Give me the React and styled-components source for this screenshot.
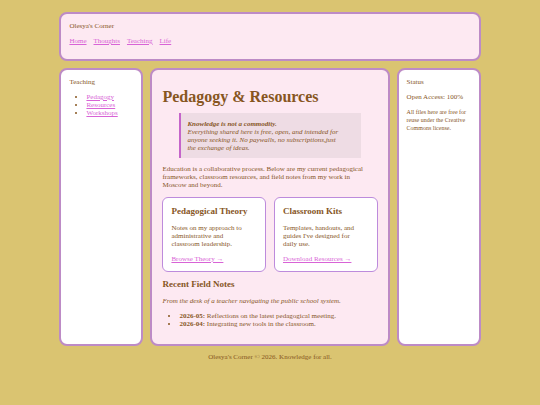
import React from "react";
import styled, { createGlobalStyle } from "styled-components";

const GlobalStyle = createGlobalStyle`
  *, *::before, *::after { box-sizing: border-box; }
  body {
    margin: 0;
    background: #dac471;
    color: #87561f;
    font-family: "Liberation Serif", serif;
    font-size: 7px;
    line-height: 8px;
  }
`;

const Page = styled.div`
  width: 78%;
  margin: 0 auto;
  padding: 12px 0;
  display: flex;
  flex-direction: column;
  gap: 7px;
`;

const Panel = styled.div`
  border: 2px solid #bd8bc6;
  border-radius: 8px;
  padding: 8px;
  background: ${({ $tint }) => ($tint ? "#fde9f2" : "#ffffff")};
`;

const Header = styled(Panel)`
  padding-bottom: 14px;
`;

const Columns = styled.div`
  display: grid;
  grid-template-columns: 84px minmax(0, 1fr) 84px;
  gap: 7px;
`;

const Main = styled(Panel)`
  padding: 10px 10px 16px;
`;

const Text = styled.p`
  margin: 0 0 7px;
`;

const Intro = styled(Text)`
  margin-bottom: 8px;
  padding-right: 10px;
`;

const Small = styled.p`
  margin: 0;
  font-size: 6px;
`;

const Nav = styled.nav`
  display: flex;
  gap: 7px;
`;

const Link = styled.a`
  color: #d863d6;
  text-decoration: underline;
`;

const List = styled.ul`
  margin: 0;
  padding-left: 17px;
`;

const Title = styled.h1`
  margin: 9px 0 8px;
  font-size: 16px;
  line-height: 16px;
`;

const Quote = styled.blockquote`
  margin: 0 17px 7px;
  padding: 7px 18px 6px 6px;
  border-left: 2px solid #c565ca;
  background: #eedce4;
  font-style: italic;
`;

const Cards = styled.div`
  display: grid;
  grid-template-columns: 1fr 1fr;
  gap: 8px;
  margin-bottom: 7px;
`;

const Card = styled.section`
  border: 1px solid #bd8bdc;
  border-radius: 6px;
  padding: 8px;
  background: #ffffff;
`;

const CardText = styled(Text)`
  padding-right: 10px;
`;

const Heading = styled.h3`
  margin: 0 0 8px;
  font-size: 9px;
  line-height: 10px;
`;

const Lead = styled(Text)`
  font-style: italic;
`;

const Footer = styled.footer`
  text-align: center;
`;

const NAV = ["Home", "Thoughts", "Teaching", "Life"];
const SECTIONS = ["Pedagogy", "Resources", "Workshops"];
const CARDS = [
  {
    title: "Pedagogical Theory",
    text: "Notes on my approach to administrative and classroom leadership.",
    link: "Browse Theory →",
  },
  {
    title: "Classroom Kits",
    text: "Templates, handouts, and guides I've designed for daily use.",
    link: "Download Resources →",
  },
];
const NOTES = [
  { date: "2026-05:", text: "Reflections on the latest pedagogical meeting." },
  { date: "2026-04:", text: "Integrating new tools in the classroom." },
];

export default function App() {
  return (
    <>
      <GlobalStyle />
      <Page>
        <Header as="header" $tint>
          <Text>Olesya's Corner</Text>
          <Nav>
            {NAV.map((name) => (
              <Link key={name} href="#">{name}</Link>
            ))}
          </Nav>
        </Header>
        <Columns>
          <Panel as="aside">
            <Text>Teaching</Text>
            <List>
              {SECTIONS.map((name) => (
                <li key={name}><Link href="#">{name}</Link></li>
              ))}
            </List>
          </Panel>
          <Main as="main" $tint>
            <Title>Pedagogy &amp; Resources</Title>
            <Quote>
              <strong>Knowledge is not a commodity.</strong>
              <br />
              Everything shared here is free, open, and intended for anyone
              seeking it. No paywalls, no subscriptions,just the exchange of
              ideas.
            </Quote>
            <Intro>
              Education is a collaborative process. Below are my current
              pedagogical frameworks, classroom resources, and field notes from
              my work in Moscow and beyond.
            </Intro>
            <Cards>
              {CARDS.map((card) => (
                <Card key={card.title}>
                  <Heading>{card.title}</Heading>
                  <CardText>{card.text}</CardText>
                  <Link href="#">{card.link}</Link>
                </Card>
              ))}
            </Cards>
            <Heading>Recent Field Notes</Heading>
            <Lead>From the desk of a teacher navigating the public school system.</Lead>
            <List>
              {NOTES.map((note) => (
                <li key={note.date}><strong>{note.date}</strong> {note.text}</li>
              ))}
            </List>
          </Main>
          <Panel as="aside">
            <Text>Status</Text>
            <Text>Open Access: 100%</Text>
            <Small>All files here are free for reuse under the Creative Commons license.</Small>
          </Panel>
        </Columns>
        <Footer>Olesya's Corner © 2026. Knowledge for all.</Footer>
      </Page>
    </>
  );
}
